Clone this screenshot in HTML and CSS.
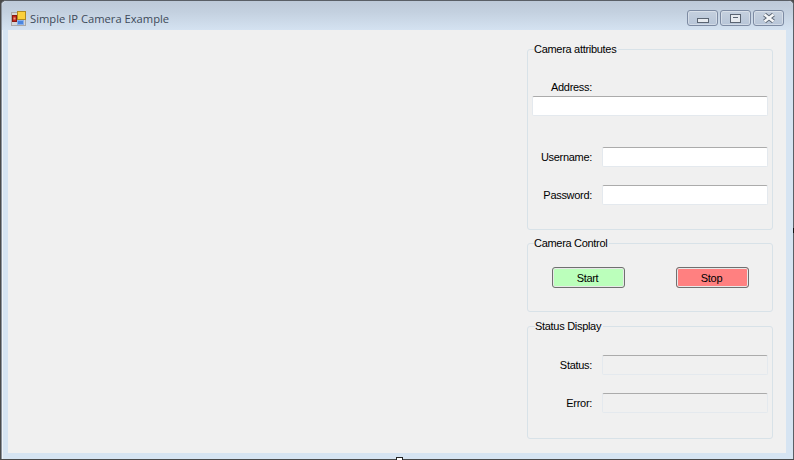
FILE: index.html
```html
<!DOCTYPE html>
<html lang="en">
<head>
  <meta charset="UTF-8">
  <title>Simple IP Camera Example</title>
  <link rel="stylesheet" href="styles.css">
</head>
<body>
  <div class="window">
    <div class="title-bar">
      <svg class="app-icon" width="16" height="16" viewBox="0 0 16 16">
        <rect x="0.5" y="1.5" width="14" height="13" fill="#d4d6d8" stroke="#a8a8a8"/>
        <rect x="1.5" y="4.5" width="4" height="6" fill="#c4281c" stroke="#8a1a12"/>
        <rect x="2.5" y="6.5" width="2" height="2" fill="#e8a080"/>
        <rect x="6.5" y="0.5" width="8" height="8" fill="#fbd03c" stroke="#b08a20"/>
        <rect x="6.5" y="9.5" width="6" height="4" fill="#4a86e0" stroke="#8ab0e8"/>
      </svg>
      <span class="title-text">Simple IP Camera Example</span>
      <div class="window-buttons">
        <div class="win-btn"><span class="glyph-min"></span></div>
        <div class="win-btn"><span class="glyph-max"></span></div>
        <div class="win-btn">
          <svg width="14" height="10" viewBox="0 0 14 10">
            <path d="M2.5 1.5 L11.5 8.5 M11.5 1.5 L2.5 8.5" stroke="#5a6472" stroke-width="4.4" fill="none"/>
            <path d="M2.5 1.5 L11.5 8.5 M11.5 1.5 L2.5 8.5" stroke="#f4f6f8" stroke-width="2.6" fill="none"/>
          </svg>
        </div>
      </div>
    </div>

    <div class="client">
      <div class="video-area"></div>
      <div class="side-panel">
        <fieldset class="group group-attributes">
          <legend>Camera attributes</legend>
          <div class="address-label">Address:</div>
          <input class="field field-wide" type="text">
          <div class="row row-username">
            <label>Username:</label>
            <input class="field" type="text">
          </div>
          <div class="row row-password">
            <label>Password:</label>
            <input class="field" type="password">
          </div>
        </fieldset>

        <fieldset class="group group-control">
          <legend>Camera Control</legend>
          <div class="buttons">
            <button class="action start-btn">Start</button>
            <button class="action stop-btn">Stop</button>
          </div>
        </fieldset>

        <fieldset class="group group-status">
          <legend>Status Display</legend>
          <div class="row row-status">
            <label>Status:</label>
            <input class="field" type="text" disabled>
          </div>
          <div class="row row-error">
            <label>Error:</label>
            <input class="field" type="text" disabled>
          </div>
        </fieldset>
      </div>
    </div>

    <!-- little resize marks at the edge of the capture -->
    <span class="mark-bottom"></span>
    <span class="mark-right"></span>
  </div>
</body>
</html>
```

FILE: styles.css
```css
/* Window frame */
html, body {
  margin: 0;
  padding: 0;
}

body {
  width: 794px;
  height: 460px;
  overflow: hidden;
  background: #4a4a4a;
  font-family: "Liberation Sans", Arial, sans-serif;
  font-size: 11px;
  letter-spacing: -0.3px;
  color: #000;
}

.window {
  position: relative;
  box-sizing: border-box;
  width: 793px;
  height: 459px;
  margin-left: 1px;
  padding: 0 7px 6px 6px;
  background: #d6e4f2;
  border-top: 1px solid #5a5f66;
  border-left: 1px solid #8a929c;
  border-right: 1px solid #5a5f66;
  border-radius: 5px 5px 0 0;
  display: flex;
  flex-direction: column;
  box-shadow: inset 1px 1px 0 #eef3f8;
}

/* Title bar */
.title-bar {
  box-sizing: border-box;
  height: 29px;
  margin: 0 -7px 0 -6px;
  padding: 6px 2px 0 9px;
  display: flex;
  align-items: center;
  background: linear-gradient(180deg, #bdc9d8 0%, #c4d1e0 40%, #d4e2f1 100%);
  border-radius: 5px 5px 0 0;
}

.app-icon {
  flex: none;
}

.title-text {
  margin-left: 3px;
  font-family: "Open Sans", sans-serif;
  font-size: 11.2px;
  letter-spacing: 0;
  color: #3d4a5a;
}

.window-buttons {
  margin-left: auto;
  margin-top: -1px;
  margin-right: 7px;
  display: flex;
  gap: 2px;
}

.win-btn {
  box-sizing: border-box;
  width: 31px;
  height: 16px;
  border: 1px solid #7d8ba3;
  border-radius: 3px;
  background: linear-gradient(180deg, #c5d0de, #b7c5d8);
  box-shadow: inset 0 0 0 1px rgba(255, 255, 255, 0.35);
  display: flex;
  align-items: center;
  justify-content: center;
}

.glyph-min {
  width: 10px;
  height: 3px;
  margin-top: 5px;
  background: #e6eaef;
  border: 1px solid #5a6472;
}

.glyph-max {
  box-sizing: border-box;
  width: 11px;
  height: 9px;
  background: #e6eaef;
  border: 1px solid #5a6472;
  padding: 2px;
}

.glyph-max::before {
  content: "";
  display: block;
  height: 1px;
  background: #5a6472;
}

/* Client area */
.client {
  flex: 1;
  display: flex;
  background: #f0f0f0;
}

.video-area {
  flex: 1;
}

.side-panel {
  box-sizing: border-box;
  width: 259px;
  padding: 12px 13px 0 0;
}

/* Group boxes */
.group {
  box-sizing: border-box;
  margin: 0;
  padding: 0 4px;
  border: 1px solid #d8e2e8;
  border-radius: 3px;
  min-width: 0;
}

.group legend {
  margin-left: 2px;
  padding: 0 2px 0 0;
  line-height: 14px;
  height: 14px;
}

.group-attributes {
  height: 188px;
}

.group-control {
  height: 76px;
  margin-top: 6px;
}

.group-status {
  height: 120px;
  margin-top: 7px;
}

.group-status legend {
  margin-left: 3px;
}

/* Labels and fields */
.address-label {
  margin-top: 24px;
  margin-left: 19px;
  line-height: 14px;
}

.field {
  box-sizing: border-box;
  width: 166px;
  height: 20px;
  margin: 0;
  padding: 1px 3px;
  background: #fff;
  border: 1px solid #e4e9ee;
  border-top-color: #ababab;
  border-radius: 2px;
  outline: none;
}

.field:disabled {
  background: #f0f0f0;
}

.field-wide {
  display: block;
  width: 236px;
  margin-top: 2px;
}

.row {
  display: flex;
  align-items: center;
  justify-content: space-between;
}

.row label {
  width: 60px;
  text-align: right;
}

.row-username {
  margin-top: 31px;
}

.row-password {
  margin-top: 18px;
}

.row-status {
  margin-top: 22px;
}

.row-error {
  margin-top: 18px;
}

/* Start and stop buttons */
.buttons {
  display: flex;
  justify-content: space-between;
  padding: 17px 19px 0 20px;
}

.action {
  box-sizing: border-box;
  width: 73px;
  height: 21px;
  padding: 0 2px 0 0;
  font: inherit;
  letter-spacing: inherit;
  color: #000;
  border: 1px solid #707070;
  border-radius: 3px;
  box-shadow: inset 0 0 0 1px #e8e8e8;
}

.start-btn {
  background: #bbffbb;
}

.stop-btn {
  background: #ff8080;
}

/* Marks on the capture edge */
.mark-bottom {
  position: absolute;
  left: 394px;
  bottom: -1px;
  width: 5px;
  height: 2px;
  background: #fff;
  border: 1px solid #222;
  border-bottom: none;
}

.mark-right {
  position: absolute;
  right: -2px;
  top: 227px;
  width: 2px;
  height: 5px;
  background: #111;
}
```
